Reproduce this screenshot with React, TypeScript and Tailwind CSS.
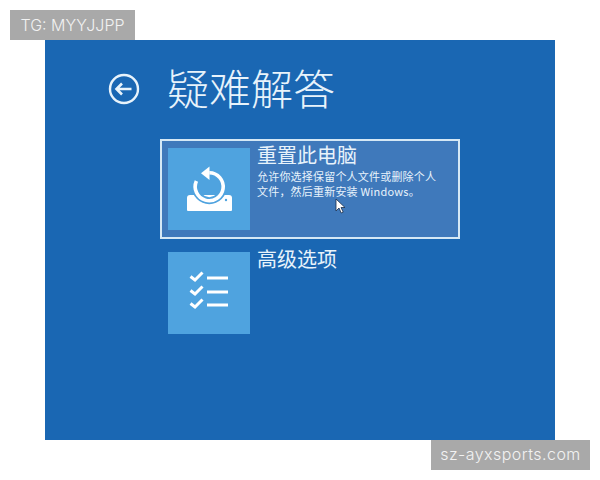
export default function App() {
  const cjk = "font-['Noto_Sans_CJK_SC','Noto_Sans',sans-serif]";
  return (
    <div className="relative w-[600px] h-[480px] bg-white overflow-hidden">
      <div className="absolute left-[10px] top-[10px] w-[125px] h-[30px] bg-[#a9a9a9] flex items-center justify-center text-[#f2f2f2] text-[16px] font-['Inter',sans-serif] font-light">
        TG: MYYJJPP
      </div>
      <div className="absolute left-[431px] top-[440px] w-[159px] h-[30px] bg-[#a9a9a9] flex items-center justify-center pb-[2px] text-[#f2f2f2] text-[16px] tracking-[0.45px] font-['Inter',sans-serif] font-light">
        sz-ayxsports.com
      </div>
      <div className="pt-[40px] pl-[45px]">
        <div className={`w-[510px] h-[400px] bg-[#1a67b3] text-[#e8f3fb] ${cjk}`}>
          <div className="flex items-center h-[99px] pl-[63px] pb-[2px]">
            <svg width="32" height="32" viewBox="0 0 32 32" fill="none" stroke="#e8f3fb" strokeWidth="2.4" className="shrink-0">
              <circle cx="16" cy="16" r="14" />
              <path d="M23.5 16H8.5M14 10.5L8.5 16l5.5 5.5" strokeWidth="2.6" />
            </svg>
            <div className="ml-[27px] -mt-[3px] text-[42px] leading-[48px] font-light">疑难解答</div>
          </div>
          <div className="ml-[115px] w-[300px] h-[100px] border-2 border-[#d5e8f5] bg-[#3f79bb] flex pl-[6px] pt-[7px]">
            <div className="w-[82px] h-[82px] bg-[#4fa3df] flex items-center justify-center shrink-0">
              <svg width="46" height="46" viewBox="0 0 46 46" fill="none">
                <path d="M1 32Q1 29 4 29H43Q46 29 46 32V44a1 1 0 0 1-1 1H2a1 1 0 0 1-1-1Z" fill="#fff" />
                <circle cx="23.3" cy="20.7" r="14" stroke="#4fa3df" strokeWidth="7" />
                <path d="M23.3 6.7A14 14 0 1 1 10.4 15" stroke="#fff" strokeWidth="3.6" />
                <path d="M15 7.2L23.5 0.5V14Z" fill="#fff" />
                <circle cx="40" cy="34" r="1.2" fill="#4fa3df" />
              </svg>
            </div>
            <div className="ml-[7px] relative">
              <div className="text-[20px] leading-[24px] -mt-[5px]">重置此电脑</div>
              <div className="text-[11px] leading-[15px] mt-[2px] w-[186px] tracking-[0.2px]">
                允许你选择保留个人文件或删除个人文件，然后重新安装 Windows。
              </div>
              <svg width="12" height="17" viewBox="0 0 12 17" className="absolute left-[78px] top-[50px]">
                <path d="M1 1v12l3-3 2.2 5 2-.9L6 9.5h4Z" fill="#fff" stroke="#1c2f4a" strokeWidth="0.8" />
              </svg>
            </div>
          </div>
          <div className="ml-[123px] mt-[13px] flex">
            <div className="w-[82px] h-[82px] bg-[#4fa3df] flex items-center justify-center shrink-0">
              <svg width="44" height="44" viewBox="0 0 44 44" fill="none" stroke="#fff" strokeWidth="3">
                <path d="M3.5 5.5L8 9l7.5-7.5M3.5 19.5L8 23l7.5-7.5M3.5 32.5L8 36l7.5-7.5" />
                <path d="M20 7h21M20 21h21M20 34h21" strokeWidth="3" />
              </svg>
            </div>
            <div className="ml-[7px] text-[20px] leading-[24px] -mt-[5px]">高级选项</div>
          </div>
        </div>
      </div>
    </div>
  );
}
